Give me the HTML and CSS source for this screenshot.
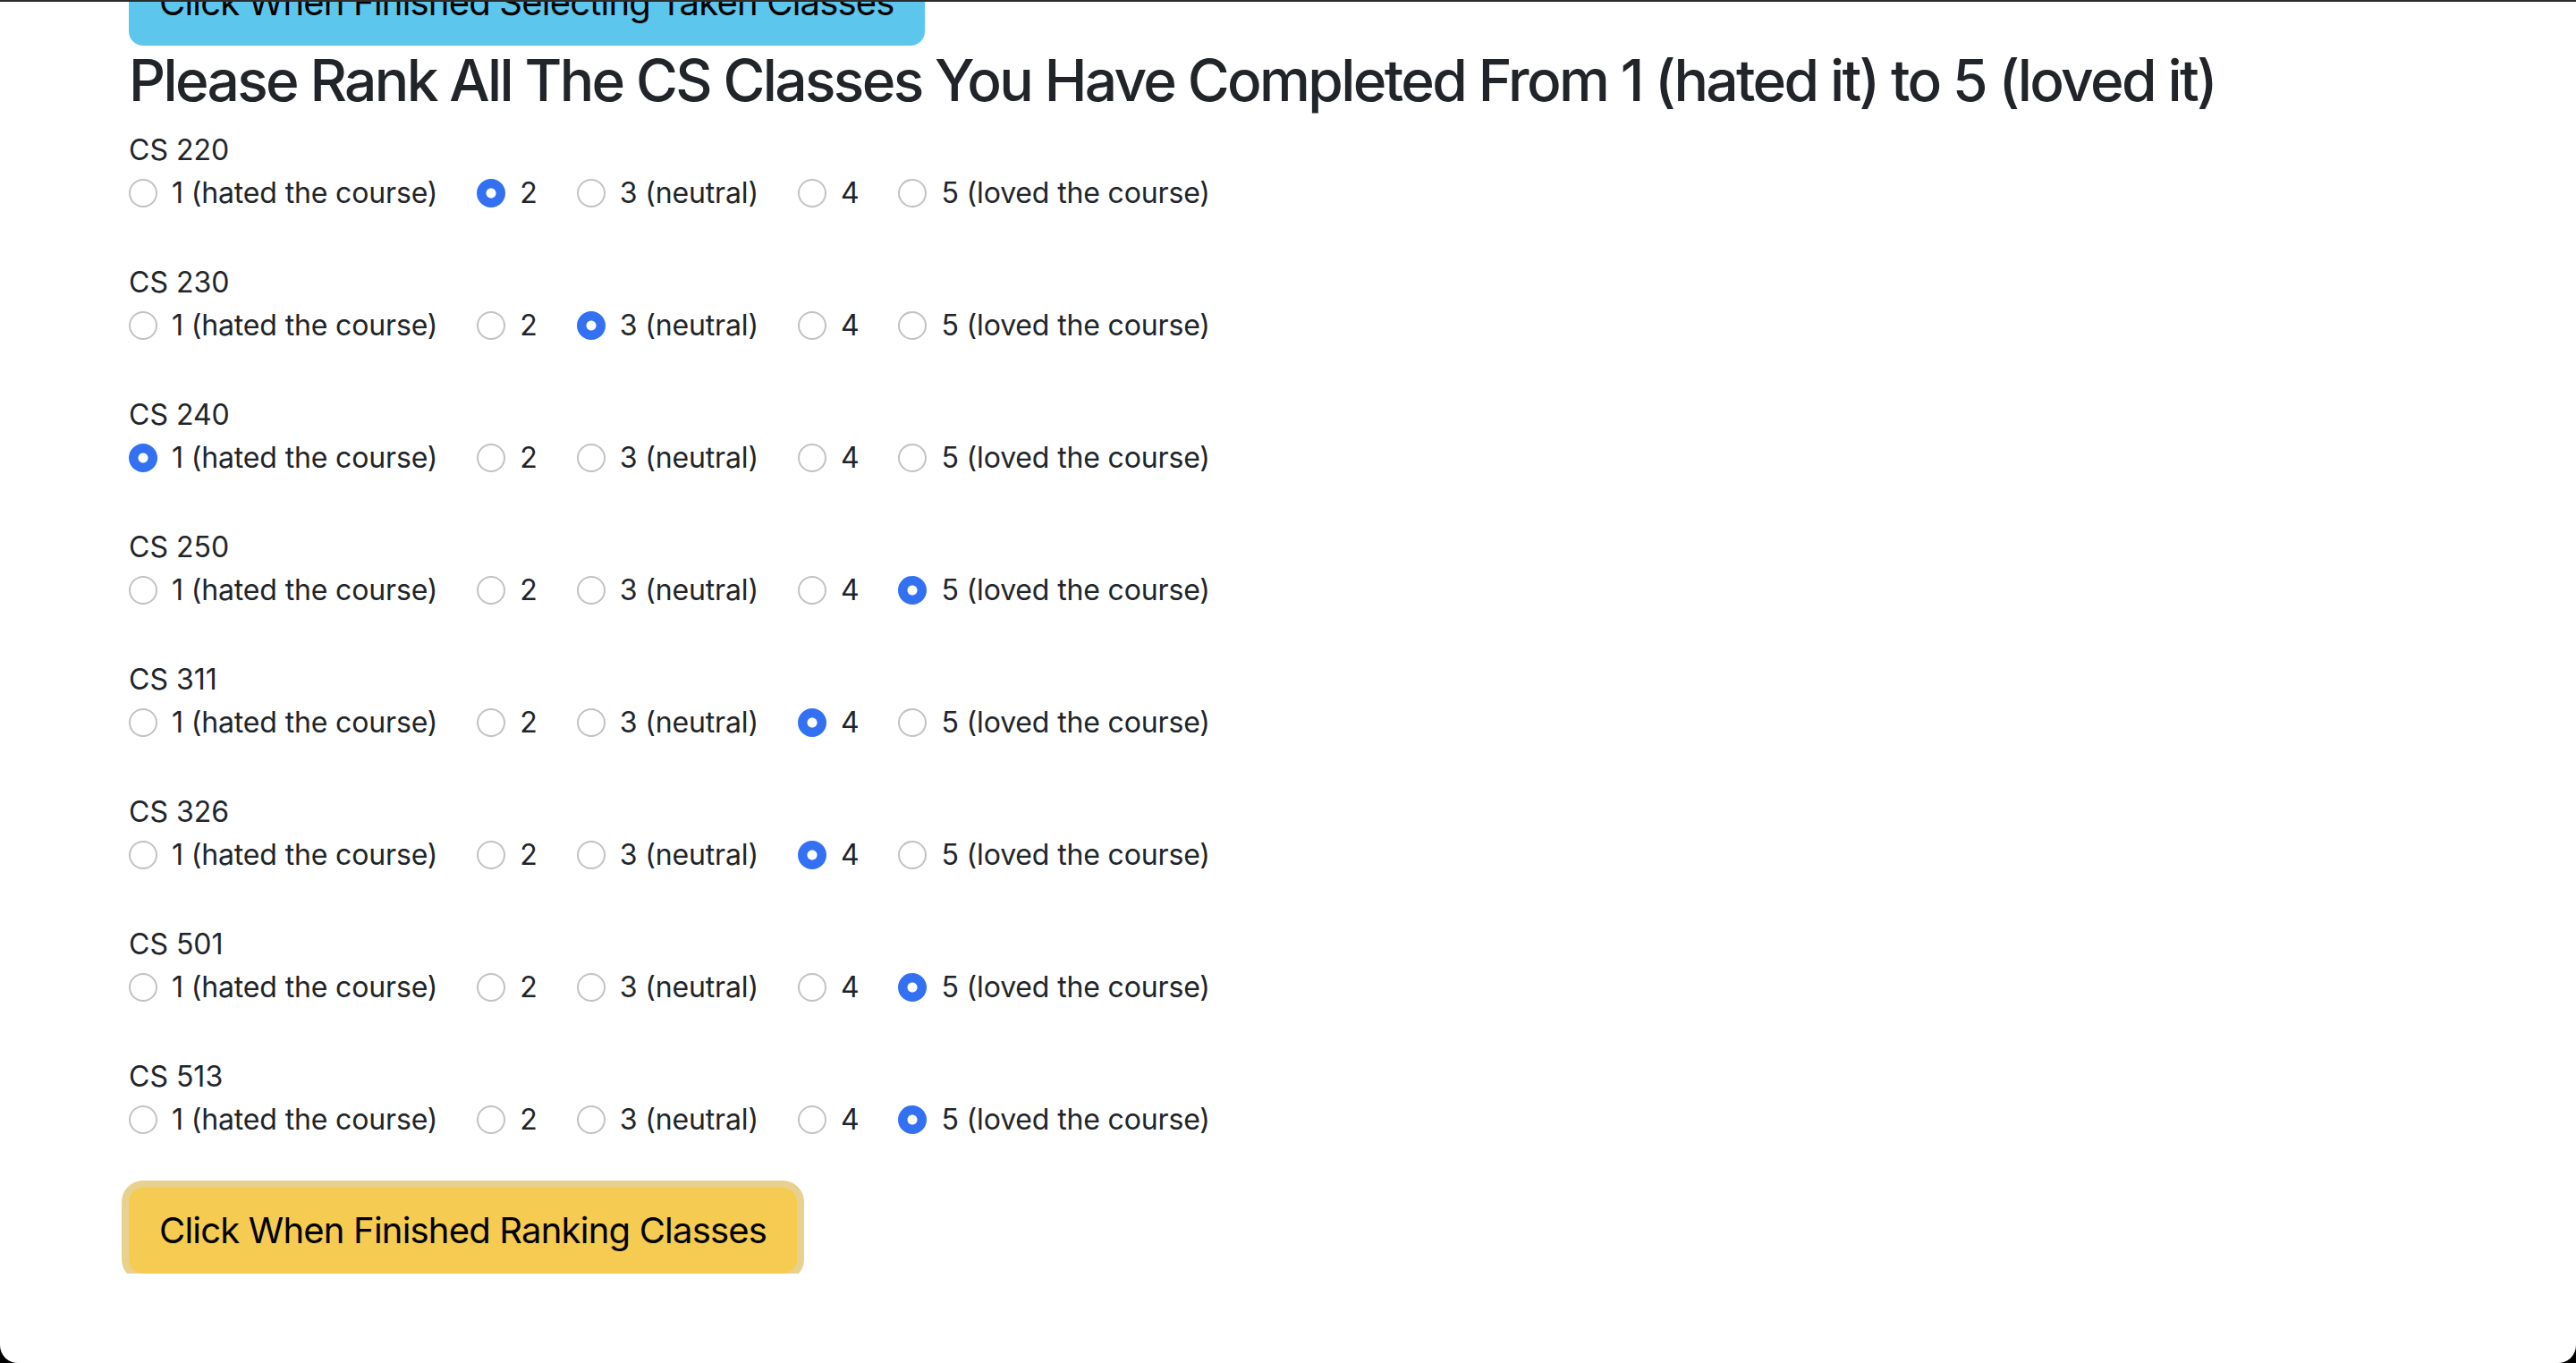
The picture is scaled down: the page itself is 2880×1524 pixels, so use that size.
FILE: index.html
```html
<!DOCTYPE html>
<html lang="en">
<head>
<meta charset="utf-8">
<title>Rank Classes</title>
<link rel="stylesheet" href="styles.css">
</head>
<body>
<div class="frame"></div>
<main class="container">
  <button class="btn btn-info" type="button">Click When Finished Selecting Taken Classes</button>
  <h2 class="title">Please Rank All The CS Classes You Have Completed From 1 (hated it) to 5 (loved it)</h2>

  <div class="group">
    <div class="course">CS 220</div>
    <div class="options">
      <label class="option"><input type="radio" name="cs220"><span>1 (hated the course)</span></label>
      <label class="option"><input type="radio" name="cs220" checked><span>2</span></label>
      <label class="option"><input type="radio" name="cs220"><span>3 (neutral)</span></label>
      <label class="option"><input type="radio" name="cs220"><span>4</span></label>
      <label class="option"><input type="radio" name="cs220"><span>5 (loved the course)</span></label>
    </div>
  </div>

  <div class="group">
    <div class="course">CS 230</div>
    <div class="options">
      <label class="option"><input type="radio" name="cs230"><span>1 (hated the course)</span></label>
      <label class="option"><input type="radio" name="cs230"><span>2</span></label>
      <label class="option"><input type="radio" name="cs230" checked><span>3 (neutral)</span></label>
      <label class="option"><input type="radio" name="cs230"><span>4</span></label>
      <label class="option"><input type="radio" name="cs230"><span>5 (loved the course)</span></label>
    </div>
  </div>

  <div class="group">
    <div class="course">CS 240</div>
    <div class="options">
      <label class="option"><input type="radio" name="cs240" checked><span>1 (hated the course)</span></label>
      <label class="option"><input type="radio" name="cs240"><span>2</span></label>
      <label class="option"><input type="radio" name="cs240"><span>3 (neutral)</span></label>
      <label class="option"><input type="radio" name="cs240"><span>4</span></label>
      <label class="option"><input type="radio" name="cs240"><span>5 (loved the course)</span></label>
    </div>
  </div>

  <div class="group">
    <div class="course">CS 250</div>
    <div class="options">
      <label class="option"><input type="radio" name="cs250"><span>1 (hated the course)</span></label>
      <label class="option"><input type="radio" name="cs250"><span>2</span></label>
      <label class="option"><input type="radio" name="cs250"><span>3 (neutral)</span></label>
      <label class="option"><input type="radio" name="cs250"><span>4</span></label>
      <label class="option"><input type="radio" name="cs250" checked><span>5 (loved the course)</span></label>
    </div>
  </div>

  <div class="group">
    <div class="course">CS 311</div>
    <div class="options">
      <label class="option"><input type="radio" name="cs311"><span>1 (hated the course)</span></label>
      <label class="option"><input type="radio" name="cs311"><span>2</span></label>
      <label class="option"><input type="radio" name="cs311"><span>3 (neutral)</span></label>
      <label class="option"><input type="radio" name="cs311" checked><span>4</span></label>
      <label class="option"><input type="radio" name="cs311"><span>5 (loved the course)</span></label>
    </div>
  </div>

  <div class="group">
    <div class="course">CS 326</div>
    <div class="options">
      <label class="option"><input type="radio" name="cs326"><span>1 (hated the course)</span></label>
      <label class="option"><input type="radio" name="cs326"><span>2</span></label>
      <label class="option"><input type="radio" name="cs326"><span>3 (neutral)</span></label>
      <label class="option"><input type="radio" name="cs326" checked><span>4</span></label>
      <label class="option"><input type="radio" name="cs326"><span>5 (loved the course)</span></label>
    </div>
  </div>

  <div class="group">
    <div class="course">CS 501</div>
    <div class="options">
      <label class="option"><input type="radio" name="cs501"><span>1 (hated the course)</span></label>
      <label class="option"><input type="radio" name="cs501"><span>2</span></label>
      <label class="option"><input type="radio" name="cs501"><span>3 (neutral)</span></label>
      <label class="option"><input type="radio" name="cs501"><span>4</span></label>
      <label class="option"><input type="radio" name="cs501" checked><span>5 (loved the course)</span></label>
    </div>
  </div>

  <div class="group">
    <div class="course">CS 513</div>
    <div class="options">
      <label class="option"><input type="radio" name="cs513"><span>1 (hated the course)</span></label>
      <label class="option"><input type="radio" name="cs513"><span>2</span></label>
      <label class="option"><input type="radio" name="cs513"><span>3 (neutral)</span></label>
      <label class="option"><input type="radio" name="cs513"><span>4</span></label>
      <label class="option"><input type="radio" name="cs513" checked><span>5 (loved the course)</span></label>
    </div>
  </div>

  <button class="btn btn-warning" type="button">Click When Finished Ranking Classes</button>
</main>
</body>
</html>
```

FILE: styles.css
```css
*, *::before, *::after {
  box-sizing: border-box;
}

html, body {
  margin: 0;
  padding: 0;
  background: #ffffff;
}

body {
  font-family: Inter, "Noto Sans", "Liberation Sans", sans-serif;
  font-size: 32px;
  line-height: 48px;
  color: #212529;
  overflow: hidden;
}

.frame {
  position: fixed;
  top: 0;
  left: 0;
  right: 0;
  bottom: 0;
  border-top: 2px solid #2c2c2c;
  border-radius: 0 0 20px 20px;
  box-shadow: 0 0 0 60px #000;
  pointer-events: none;
  z-index: 10;
}

.container {
  width: 100%;
  max-width: 2640px;
  margin: -45px auto 0;
  padding: 0 24px;
  display: flex;
  flex-direction: column;
  align-items: flex-start;
}

.btn {
  font-family: inherit;
  font-size: 40px;
  line-height: 60px;
  font-weight: 400;
  letter-spacing: -0.8px;
  color: #000;
  padding: 16px 32px;
  border: 2px solid transparent;
  border-radius: 16px;
  cursor: pointer;
}

.btn-info {
  background: #5dc6ec;
  border-color: #5dc6ec;
}

.btn-warning {
  background: #f6cb51;
  border-color: #f6cb51;
  box-shadow: 0 0 0 8px #e8d08e;
  margin-top: 0;
}

.title {
  font-size: 64px;
  line-height: 76.8px;
  font-weight: 500;
  letter-spacing: -2.62px;
  margin: 1px 0 15px;
  color: #212529;
}

.group {
  margin-bottom: 52px;
}

.course {
  height: 48px;
}

.options {
  display: flex;
  gap: 44px;
  height: 48px;
  letter-spacing: -0.15px;
}

.option {
  display: flex;
  align-items: flex-start;
  gap: 16px;
}

.option input {
  appearance: none;
  -webkit-appearance: none;
  width: 32px;
  height: 32px;
  margin: 8px 0 0;
  border: 2px solid #c2c2c2;
  border-radius: 50%;
  background: #fff;
  flex-shrink: 0;
}

.option input:checked {
  border-color: #3371f2;
  background: radial-gradient(circle, #fff 0, #fff 5px, #3371f2 6px);
}
```
